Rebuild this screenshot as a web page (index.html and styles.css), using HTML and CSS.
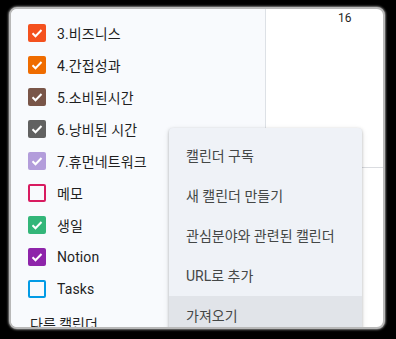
FILE: index.html
```html
<!DOCTYPE html>
<html lang="ko">
<head>
  <meta charset="UTF-8" />
  <meta name="viewport" content="width=device-width, initial-scale=1" />
  <title>캘린더</title>
  <link rel="stylesheet" href="styles.css">
</head>
<body>
  <div class="frame">
    <div class="sidebar">
      <ul class="cal-list">
        <li class="cal"><span class="box" style="background:#f4511e"><svg viewBox="0 0 18 18"><path d="M4.5 9.2l3 3 6-6.2"/></svg></span>3.비즈니스</li>
        <li class="cal"><span class="box" style="background:#ef6c00"><svg viewBox="0 0 18 18"><path d="M4.5 9.2l3 3 6-6.2"/></svg></span>4.간접성과</li>
        <li class="cal"><span class="box" style="background:#795548"><svg viewBox="0 0 18 18"><path d="M4.5 9.2l3 3 6-6.2"/></svg></span>5.소비된시간</li>
        <li class="cal"><span class="box" style="background:#616161"><svg viewBox="0 0 18 18"><path d="M4.5 9.2l3 3 6-6.2"/></svg></span>6.낭비된 시간</li>
        <li class="cal"><span class="box" style="background:#b39ddb"><svg viewBox="0 0 18 18"><path d="M4.5 9.2l3 3 6-6.2"/></svg></span>7.휴먼네트워크</li>
        <li class="cal"><span class="box empty" style="border-color:#d81b60"></span>메모</li>
        <li class="cal"><span class="box" style="background:#33b679"><svg viewBox="0 0 18 18"><path d="M4.5 9.2l3 3 6-6.2"/></svg></span>생일</li>
        <li class="cal"><span class="box" style="background:#8e24aa"><svg viewBox="0 0 18 18"><path d="M4.5 9.2l3 3 6-6.2"/></svg></span>Notion</li>
        <li class="cal"><span class="box empty" style="border-color:#039be5"></span>Tasks</li>
      </ul>
      <div class="section">다른 캘린더</div>
    </div>

    <div class="main">
      <div class="day-head">16</div>
      <div class="day-row"></div>
    </div>

    <!-- menu opened from the "+" of other calendars -->
    <ul class="menu">
      <li>캘린더 구독</li>
      <li>새 캘린더 만들기</li>
      <li>관심분야와 관련된 캘린더</li>
      <li>URL로 추가</li>
      <li class="active">가져오기</li>
    </ul>
  </div>
</body>
</html>
```

FILE: styles.css
```css
html, body {
  height: 100%;
}

body {
  margin: 0;
  background-color: #000;
  font-family: Roboto, "Noto Sans CJK KR", sans-serif;
  color: #1f1f1f;
  overflow: hidden;
}

.frame {
  position: relative;
  display: flex;
  margin: 7px 0 0 9px;
  width: 372px;
  height: 318px;
  border: 2px solid #b8b8b8;
  border-radius: 8px;
  overflow: hidden;
  background-color: #fff;
  box-shadow: 0 0 2px 1px rgba(200, 200, 200, 0.6);
}

.sidebar {
  width: 254px;
  flex-shrink: 0;
  background-color: #f8fafd;
  border-right: 1px solid #dde1e6;
}

.cal-list {
  list-style: none;
  margin: 0;
  padding: 8px 0 0 17px;
}

.cal {
  display: flex;
  align-items: center;
  height: 32px;
  font-size: 14px;
  letter-spacing: 0.1px;
}

.box {
  display: flex;
  align-items: center;
  justify-content: center;
  width: 18px;
  height: 18px;
  margin-right: 11px;
  border-radius: 2px;
  box-sizing: border-box;
}

.box svg {
  width: 18px;
  height: 18px;
  fill: none;
  stroke: #fff;
  stroke-width: 2;
}

.box.empty {
  border: 2px solid;
  background-color: transparent;
}

.section {
  margin: 8px 0 0 19px;
  font-size: 14px;
}

.main {
  flex: 1;
}

.day-head {
  padding: 2px 0 0 72px;
  height: 156px;
  font-size: 12px;
  color: #1f1f1f;
  border-bottom: 1px solid #dadce0;
}

.menu {
  position: absolute;
  left: 158px;
  top: 119px;
  width: 193px;
  margin: 0;
  padding: 8px 0 0;
  list-style: none;
  background-color: #eff2f7;
  border-radius: 4px;
  box-shadow: 0 1px 3px rgba(0, 0, 0, 0.25), 0 2px 6px rgba(0, 0, 0, 0.1);
}

.menu li {
  height: 40px;
  line-height: 40px;
  padding-left: 17px;
  font-size: 14px;
  color: #444746;
}

.menu li.active {
  background-color: #e1e4e9;
}
```
